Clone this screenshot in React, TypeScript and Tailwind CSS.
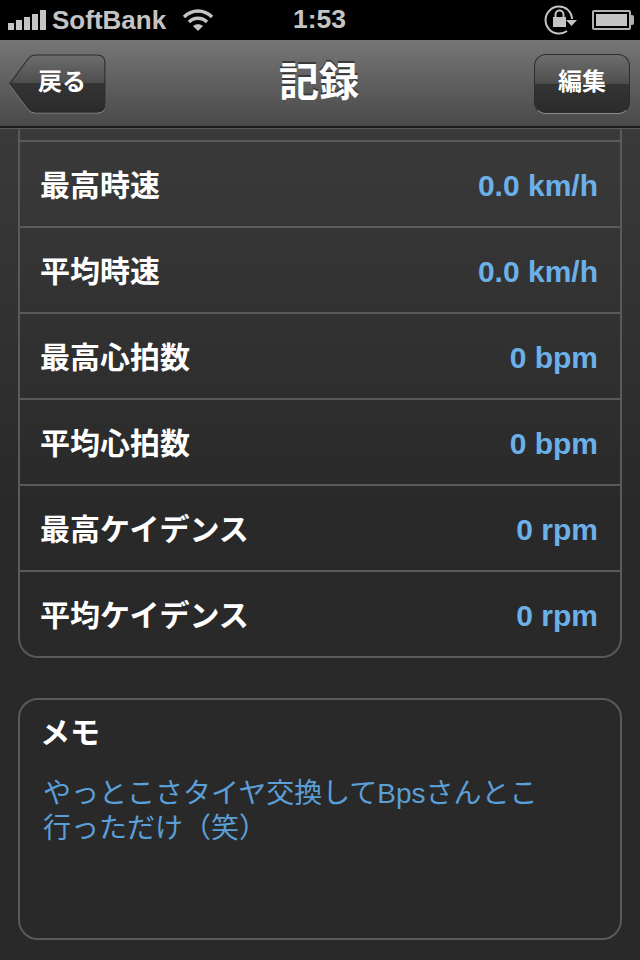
const jp = "font-['Liberation_Sans','Noto_Sans_CJK_JP',sans-serif]";

const rows = [
  { label: "最高時速", value: "0.0 km/h" },
  { label: "平均時速", value: "0.0 km/h" },
  { label: "最高心拍数", value: "0 bpm" },
  { label: "平均心拍数", value: "0 bpm" },
  { label: "最高ケイデンス", value: "0 rpm" },
  { label: "平均ケイデンス", value: "0 rpm" },
];

function SignalBars() {
  return (
    <div className="flex items-end gap-[2px]">
      <div className="h-[7px] w-[6px] bg-[#c4c4c4]" />
      <div className="h-[10px] w-[6px] bg-[#c4c4c4]" />
      <div className="h-[13px] w-[6px] bg-[#c4c4c4]" />
      <div className="h-[16px] w-[6px] bg-[#c4c4c4]" />
      <div className="h-[20px] w-[6px] bg-[#c4c4c4]" />
    </div>
  );
}

function Wifi() {
  return (
    <svg width="32" height="24" viewBox="0 0 32 24" fill="none" stroke="#c4c4c4" strokeWidth="3.4">
      <path d="M2 9 C 10 1, 22 1, 30 9" />
      <path d="M7 14 C 12 9, 20 9, 25 14" />
      <path d="M16 23 L11 18 C 13.5 15.5, 18.5 15.5, 21 18 Z" fill="#c4c4c4" stroke="none" />
    </svg>
  );
}

function RotationLock() {
  return (
    <svg width="34" height="32" viewBox="0 0 34 32" fill="none">
      <path d="M25 6 A13.5 13.5 0 1 0 24 27" stroke="#c4c4c4" strokeWidth="2" />
      <path d="M25 6 A13.5 13.5 0 0 1 29 15" stroke="#c4c4c4" strokeWidth="2" />
      <path d="M23 16 H34 L28.5 22 Z" fill="#c4c4c4" />
      <rect x="10" y="13" width="13" height="10" fill="#c4c4c4" />
      <path d="M12.5 13 V10.5 A4 4 0 0 1 20.5 10.5 V13" stroke="#c4c4c4" strokeWidth="2" />
    </svg>
  );
}

function Battery() {
  return (
    <div className="flex items-center">
      <div className="h-[20px] w-[39px] rounded-[2px] border-2 border-[#b0b0b0] p-[2px]">
        <div className="h-full w-full bg-[#c4c4c4]" />
      </div>
      <div className="h-[10px] w-[3px] rounded-r-[2px] bg-[#b0b0b0]" />
    </div>
  );
}

function StatusBar() {
  return (
    <div className="relative flex h-[40px] items-center bg-black pl-[8px] pr-[6px]">
      <SignalBars />
      <span className="ml-[6px] font-['Liberation_Sans',sans-serif] text-[26px] font-bold leading-[36px] text-[#c4c4c4]">SoftBank</span>
      <div className="ml-[16px]"><Wifi /></div>
      <span className="absolute left-[293px] top-[1px] font-['Liberation_Sans',sans-serif] text-[26.5px] font-bold leading-[36px] text-[#c4c4c4]">1:53</span>
      <div className="ml-auto flex items-center gap-[15px]">
        <RotationLock />
        <Battery />
      </div>
    </div>
  );
}

function BackButton() {
  return (
    <div className="relative flex h-[60px] w-[97px] items-center justify-end pb-[3px] pr-[20px]">
      <svg className="absolute inset-0" width="97" height="60" viewBox="0 0 97 60">
        <defs>
          <linearGradient id="backFill" x1="0" y1="0" x2="0" y2="1">
            <stop offset="0" stopColor="#6d6d6d" />
            <stop offset="0.49" stopColor="#4e4e4e" />
            <stop offset="0.5" stopColor="#343434" />
            <stop offset="1" stopColor="#2b2b2b" />
          </linearGradient>
        </defs>
        <path d="M0.8 29.5 L19 5 Q22 1 27 1 H88 Q96 1 96 9 V50 Q96 58 88 58 H27 Q22 58 19 54 Z" fill="url(#backFill)" stroke="#8a8a8a" strokeWidth="1.2" transform="translate(0 1)" />
        <path d="M0.8 29.5 L19 5 Q22 1 27 1 H88 Q96 1 96 9 V50 Q96 58 88 58 H27 Q22 58 19 54 Z" fill="url(#backFill)" stroke="#2c2c2c" strokeWidth="1.2" />
      </svg>
      <span className={`relative ${jp} text-[24px] font-bold leading-none text-white`}>戻る</span>
    </div>
  );
}

function NavBar() {
  return (
    <div className="relative flex h-[88px] items-center justify-between border-b-2 border-b-[#1c1c1c] bg-gradient-to-b from-[#767676] to-[#4a4a4a] pl-[9px] pr-[10px] pt-[1px]">
      <BackButton />
      <span className={`${jp} -ml-[2px] pb-[3px] text-[40px] font-bold leading-none text-white [text-shadow:0_-2px_0_#3a3a3a]`}>記録</span>
      <div className="flex h-[60px] w-[96px] items-center justify-center rounded-[12px] border-[1.5px] border-[#2c2c2c] border-b-[#8a8a8a] bg-[linear-gradient(#6d6d6d,#4e4e4e_49%,#343434_50%,#2b2b2b)] pb-[3px]">
        <span className={`${jp} text-[24px] font-bold leading-none text-white`}>編集</span>
      </div>
    </div>
  );
}

export default function App() {
  return (
    <div className="flex h-[960px] w-[640px] flex-col overflow-hidden bg-[#292929]">
      <StatusBar />
      <NavBar />
      <div className="flex-1 border-t border-t-[#5a5a5a] bg-[linear-gradient(#3a3a3a,#292929_380px)] px-[18px]">
        <div className="rounded-b-[20px] border-x-2 border-b-2 border-[#5a5a5a]">
          <div className="h-[13px] border-b-2 border-[#5a5a5a]" />
          {rows.map((row, i) => (
            <div
              key={row.label}
              className={`flex items-center justify-between pl-[20px] pr-[22px] pt-[3px] ${i < rows.length - 1 ? "h-[86px] border-b-2 border-[#5a5a5a]" : "h-[84px]"}`}
            >
              <span className={`${jp} text-[30px] font-bold leading-none text-white`}>{row.label}</span>
              <span className={`${jp} text-[30px] font-bold leading-none text-[#6cb0ea]`}>{row.value}</span>
            </div>
          ))}
        </div>
        <div className="mt-[40px] h-[242px] rounded-[20px] border-2 border-[#5a5a5a] pl-[20px] pt-[15px]">
          <div className={`${jp} text-[30px] font-bold leading-[36px] text-white`}>メモ</div>
          <p className={`${jp} mt-[25px] pl-[3px] text-[28px] leading-[35px] text-[#5b9fd8]`}>
            やっとこさタイヤ交換してBpsさんとこ
            <br />
            行っただけ（笑）
          </p>
        </div>
      </div>
    </div>
  );
}
